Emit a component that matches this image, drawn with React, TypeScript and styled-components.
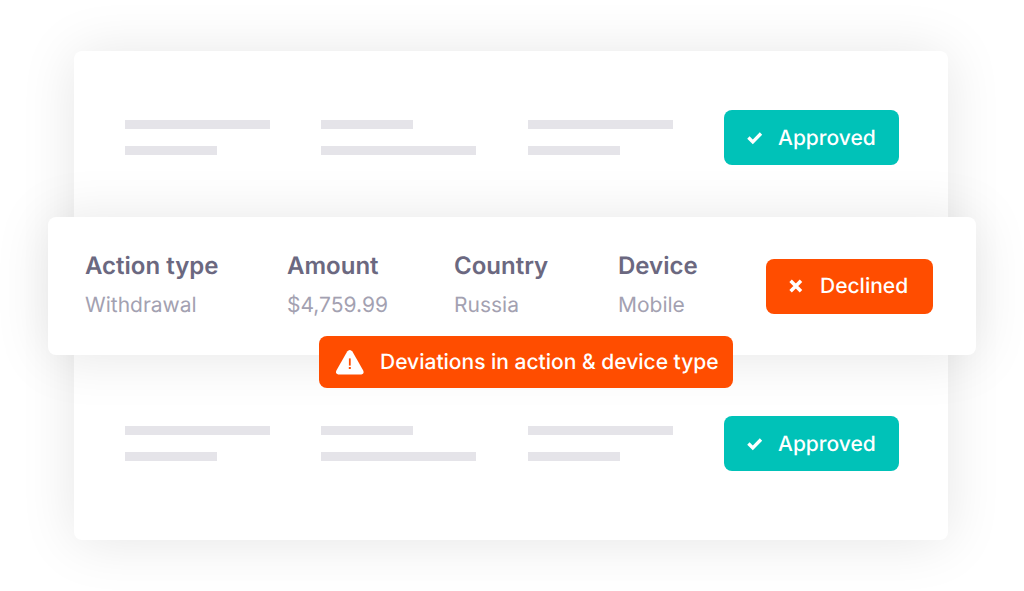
import React from "react";
import styled, { createGlobalStyle } from "styled-components";

const GlobalStyle = createGlobalStyle`
  *, *::before, *::after { box-sizing: border-box; }
  body {
    margin: 0;
    background: #ffffff;
    font-family: Inter, "Liberation Sans", sans-serif;
    text-rendering: geometricPrecision;
  }
`;

const Page = styled.main`
  padding: 51px 76px 51px 74px;
  overflow: hidden;
`;

const Panel = styled.section`
  border-radius: 8px;
  background: #ffffff;
  box-shadow: 0 2px 56px rgba(0, 0, 0, 0.1);
`;

const PlaceholderRow = styled.div<{ $top: number; $bottom: number }>`
  display: grid;
  grid-template-columns: 196fr 207fr 196fr 175px;
  align-items: center;
  padding: ${(p) => p.$top}px 49px ${(p) => p.$bottom}px 51px;
`;

const BarStack = styled.div`
  display: flex;
  flex-direction: column;
  gap: 17px;
`;

const Bar = styled.div<{ $width: number }>`
  width: ${(p) => p.$width}px;
  max-width: 90%;
  height: 9px;
  background: #e5e4e9;
`;

const Badge = styled.span<{ $tone: "approved" | "declined" }>`
  display: flex;
  align-items: center;
  gap: 15px;
  height: 55px;
  padding: 2px 0 0 21px;
  border-radius: 8px;
  background: ${(p) => (p.$tone === "approved" ? "#00c2b8" : "#ff4d00")};
  color: #ffffff;
  font-size: 21px;
  font-weight: 500;
  line-height: 26px;
  white-space: nowrap;
`;

const Highlight = styled.article`
  position: relative;
  display: grid;
  grid-template-columns: 1fr 167px;
  align-items: center;
  height: 138px;
  margin: 0 -28px 0 -26px;
  padding: 0 43px 0 37px;
  border-radius: 8px;
  background: #ffffff;
  box-shadow: 0 2px 56px rgba(0, 0, 0, 0.1);
`;

const Fields = styled.dl`
  display: grid;
  grid-template-columns: 202fr 167fr 164fr 148fr;
  margin: 0;
`;

const Term = styled.dt`
  color: #6b6880;
  font-size: 24px;
  font-weight: 600;
  line-height: 32px;
  white-space: nowrap;
`;

const Value = styled.dd`
  margin: 8px 0 0;
  color: #a3a1b1;
  font-size: 21px;
  line-height: 32px;
  white-space: nowrap;
`;

const Alert = styled.div`
  position: absolute;
  top: 119px;
  left: 271px;
  display: flex;
  align-items: center;
  gap: 16px;
  height: 52px;
  padding: 2px 14px 0 17px;
  border-radius: 8px;
  background: #ff4d00;
  color: #ffffff;
  font-size: 21px;
  font-weight: 500;
  line-height: 26px;
  white-space: nowrap;
`;

const CheckIcon = () => (
  <svg width="18" height="18" viewBox="0 0 18 18" fill="none" aria-hidden="true">
    <path d="M3.4 7.5 7.8 11.9 16 3.5" stroke="currentColor" strokeWidth="3.3" />
  </svg>
);

const CrossIcon = () => (
  <svg width="18" height="18" viewBox="0 0 18 18" fill="none" aria-hidden="true">
    <path d="M3.6 2.8 14 13.2M14 2.8 3.6 13.2" stroke="currentColor" strokeWidth="3.5" />
  </svg>
);

const WarningIcon = () => (
  <svg width="28" height="26" viewBox="0 0 28 26" aria-hidden="true">
    <path
      d="M11.2 1.6Q13.8-1.4 16.4 1.6L27.2 20.6Q28.6 24.2 25.4 24.4H2.2Q-1 24.2 .4 20.6Z"
      fill="currentColor"
    />
    <path d="M13.8 8.4V15.6" stroke="#ff4d00" strokeWidth="1.8" />
    <rect x="12.8" y="17" width="2" height="2" fill="#ff4d00" />
  </svg>
);

const Placeholders = ({ top, bottom }: { top: number; bottom: number }) => (
  <PlaceholderRow $top={top} $bottom={bottom}>
    {[
      [145, 92],
      [92, 155],
      [145, 92],
    ].map((widths, column) => (
      <BarStack key={column}>
        {widths.map((width) => (
          <Bar key={width} $width={width} />
        ))}
      </BarStack>
    ))}
    <Badge $tone="approved">
      <CheckIcon />
      Approved
    </Badge>
  </PlaceholderRow>
);

const fields = [
  ["Action type", "Withdrawal"],
  ["Amount", "$4,759.99"],
  ["Country", "Russia"],
  ["Device", "Mobile"],
];

export default function App() {
  return (
    <>
      <GlobalStyle />
      <Page>
        <Panel>
          <Placeholders top={59} bottom={52} />
          <Highlight>
            <Fields>
              {fields.map(([term, value]) => (
                <div key={term}>
                  <Term>{term}</Term>
                  <Value>{value}</Value>
                </div>
              ))}
            </Fields>
            <Badge $tone="declined">
              <CrossIcon />
              Declined
            </Badge>
            <Alert role="alert">
              <WarningIcon />
              Deviations in action &amp; device type
            </Alert>
          </Highlight>
          <Placeholders top={61} bottom={69} />
        </Panel>
      </Page>
    </>
  );
}
